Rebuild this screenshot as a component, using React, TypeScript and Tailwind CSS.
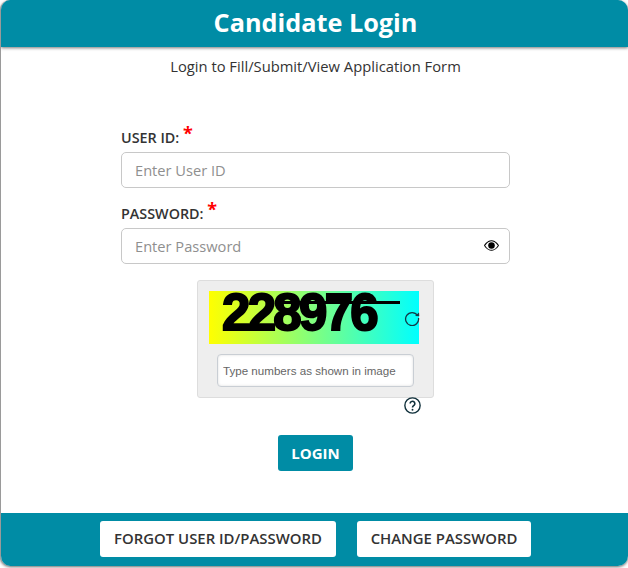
const App = () => {
  return (
    <div className="h-[568px] w-[628px] bg-white font-['Open_Sans',sans-serif]">
      <div className="flex h-[566px] w-[628px] flex-col overflow-hidden rounded-[10px] border-l border-[#9a9a9a] bg-white shadow-[0_1px_3px_#666]">
        <div className="flex h-[47px] items-center justify-center bg-[#008ca5] pb-[2px] pl-[2px] shadow-[0_1px_3px_#777]">
          <h1 className="text-[25.25px] font-bold leading-none text-white">Candidate Login</h1>
        </div>

        <div className="flex flex-col pl-[2px]">
          <p className="mt-[9px] text-center text-[14.75px] leading-[20px] text-[#333]">
            Login to Fill/Submit/View Application Form
          </p>

          <div className="mx-auto mt-[48px] w-[389px]">
            <label className="block h-[28px] text-[14.35px] font-semibold leading-[16px] text-[#333]">
              USER ID: <span className="align-[3px] text-[18px] font-bold leading-none text-[#f00]">*</span>
            </label>
            <input
              placeholder="Enter User ID"
              className="block h-[36px] w-full rounded-[5px] border border-[#c8c8c8] px-[13px] text-[14.65px] text-[#333] outline-none placeholder:text-[#8f8f8f]"
            />
            <label className="mt-[12px] block h-[28px] text-[14.35px] font-semibold leading-[16px] text-[#333]">
              PASSWORD: <span className="align-[3px] text-[18px] font-bold leading-none text-[#f00]">*</span>
            </label>
            <div className="relative">
              <input
                placeholder="Enter Password"
                className="block h-[36px] w-full rounded-[5px] border border-[#c8c8c8] px-[13px] text-[14.65px] text-[#333] outline-none placeholder:text-[#8f8f8f]"
              />
              <svg viewBox="0 0 16 16" className="absolute right-[11px] top-[10px] h-[15px] w-[15px]" fill="#000">
                <path d="M16 8s-3-5.500-8-5.500S0 8 0 8s3 5.500 8 5.500S16 8 16 8zM1.200 8A13 13 0 0 1 2.800 6C4.100 4.700 5.900 3.500 8 3.500s3.900 1.200 5.200 2.500A13 13 0 0 1 14.800 8c-.1.100-.1.200-.2.300-.3.400-.8 1-1.400 1.700C11.900 11.300 10.100 12.500 8 12.500S4.100 11.300 2.800 10A13 13 0 0 1 1.200 8z" />
                <path d="M11.500 8a3.500 3.500 0 1 1-7 0 3.500 3.500 0 0 1 7 0z" />
              </svg>
            </div>
          </div>

          <div className="relative mx-auto mt-[16px] h-[118px] w-[237px] rounded-[3px] border border-[#dddddd] bg-[#eeeeee]">
            <div className="relative ml-[11px] mt-[10px] h-[53px] w-[210px] bg-[linear-gradient(to_right,#ffff00,#00ffff)]">
              <span className="absolute left-[13px] top-0 block h-[44px] font-['Liberation_Sans',sans-serif] text-[51px] font-bold leading-[44px] tracking-[-2.700px] text-black [-webkit-text-stroke:2px_#000]">
                228976
              </span>
              <div className="absolute left-[68px] top-[10px] h-[3px] w-[123px] bg-black" />
            </div>
            <svg viewBox="0 0 16 16" className="absolute left-[206px] top-[29px] h-[16px] w-[16px]" fill="none" stroke="#123a47" strokeWidth="1.300">
              <path d="M13.500 5.500A6.500 6.500 0 1 0 14.500 8" />
              <path d="M11 6l4.300.3L15 2.500z" fill="#123a47" stroke="none" />
            </svg>
            <input
              placeholder="Type numbers as shown in image"
              className="mx-auto mt-[10px] block h-[33px] w-[197px] rounded-[4px] border border-[#c9ced4] bg-white px-[5px] font-['Liberation_Sans',sans-serif] text-[11.6px] text-[#333] shadow-[inset_0_0_3px_#ddd] outline-none placeholder:text-[#666]"
            />
            <svg viewBox="0 0 16 16" className="absolute left-[206px] top-[116px] h-[17px] w-[17px]" fill="none" stroke="#0f2f3a" strokeWidth="1.300">
              <circle cx="8" cy="8" r="7.200" />
              <path d="M5.800 6.200a2.200 2.200 0 1 1 3.600 1.700c-.8.600-1.400 1-1.400 2" strokeWidth="1.500" />
              <circle cx="8" cy="12" r=".9" fill="#0f2f3a" stroke="none" />
            </svg>
          </div>

          <button className="mx-auto mt-[37px] h-[36px] w-[75px] rounded-[3px] bg-[#008ca5] text-[15px] font-bold text-white">
            LOGIN
          </button>
        </div>

        <div className="mt-auto flex h-[53px] items-start justify-center gap-[21px] bg-[#008ca5] pl-[2px] pt-[8px]">
          <button className="h-[36px] w-[236px] rounded-[3px] bg-white pb-[2px] text-[14.9px] font-semibold text-[#333]">
            FORGOT USER ID/PASSWORD
          </button>
          <button className="h-[36px] w-[174px] rounded-[3px] bg-white pb-[2px] text-[14.9px] font-semibold text-[#333]">
            CHANGE PASSWORD
          </button>
        </div>
      </div>
    </div>
  );
};

export default App;
